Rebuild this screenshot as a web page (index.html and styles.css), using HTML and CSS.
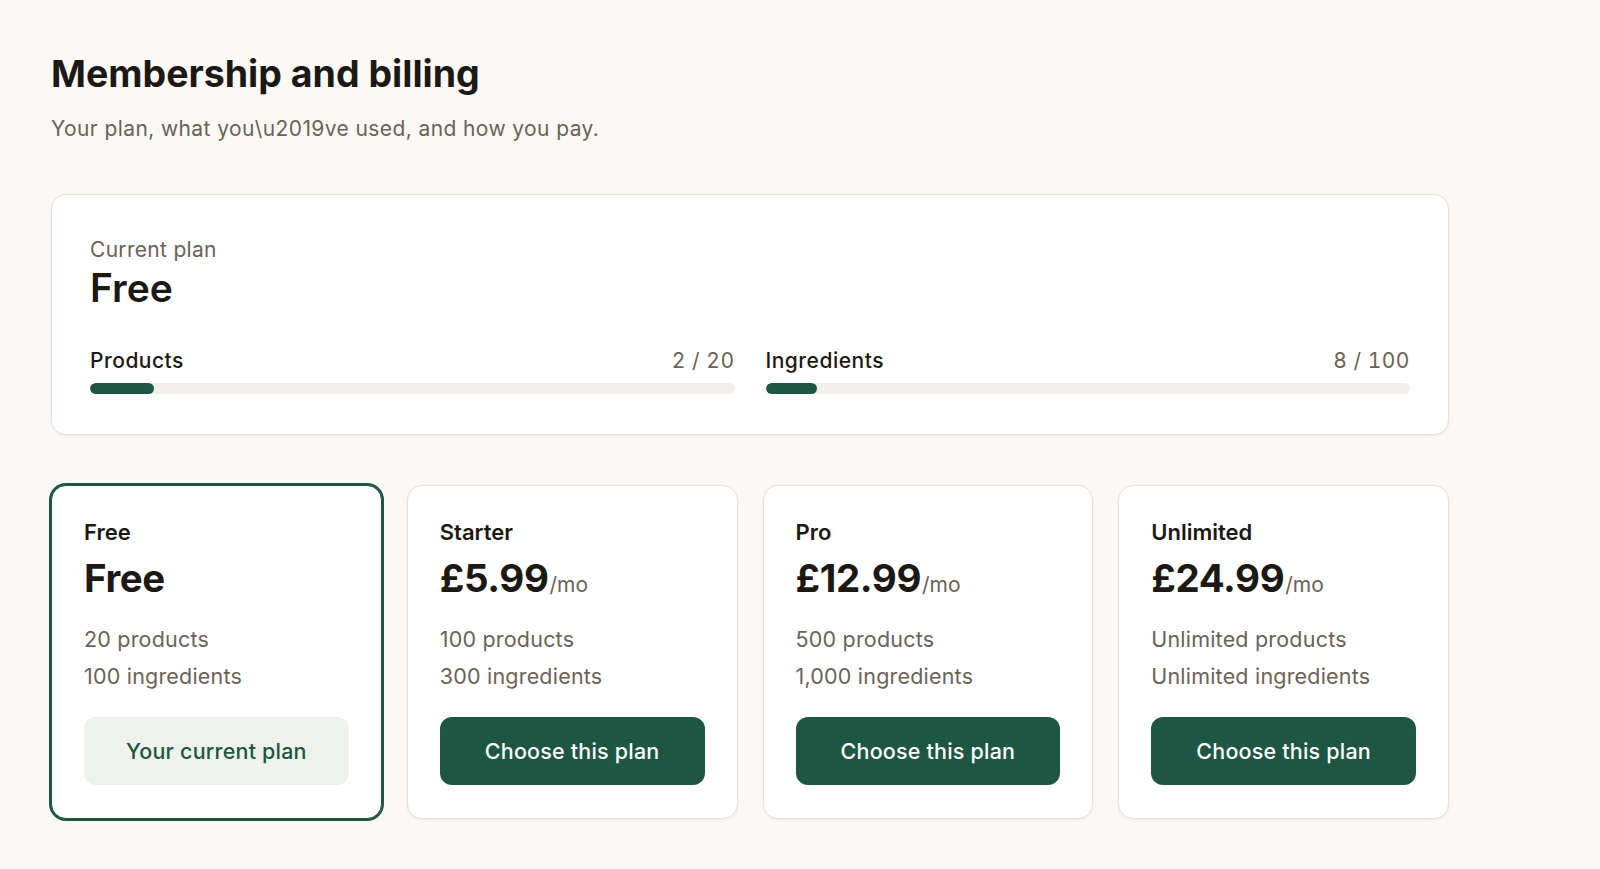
FILE: index.html
```html
<!DOCTYPE html>
<html lang="en">
<head>
<meta charset="utf-8">
<title>Membership and billing</title>
<link rel="stylesheet" href="styles.css">
</head>
<body>
<main class="page">
  <header class="page-head">
    <h1 class="page-title">Membership and billing</h1>
    <p class="page-sub">Your plan, what you\u2019ve used, and how you pay.</p>
  </header>

  <section class="current-card">
    <div class="current-label">Current plan</div>
    <div class="current-name">Free</div>
    <div class="usage">
      <div class="usage-item">
        <div class="usage-row">
          <span class="usage-name">Products</span>
          <span class="usage-count">2 / 20</span>
        </div>
        <div class="track"><div class="fill" style="width:10%"></div></div>
      </div>
      <div class="usage-item">
        <div class="usage-row">
          <span class="usage-name">Ingredients</span>
          <span class="usage-count">8 / 100</span>
        </div>
        <div class="track"><div class="fill" style="width:8%"></div></div>
      </div>
    </div>
  </section>

  <section class="plans">
    <div class="plan plan-selected">
      <div class="plan-name">Free</div>
      <div class="plan-price"><span class="amount">Free</span></div>
      <ul class="plan-features">
        <li>20 products</li>
        <li>100 ingredients</li>
      </ul>
      <button class="btn btn-current" type="button">Your current plan</button>
    </div>
    <div class="plan">
      <div class="plan-name">Starter</div>
      <div class="plan-price"><span class="amount">£5.99</span><span class="per">/mo</span></div>
      <ul class="plan-features">
        <li>100 products</li>
        <li>300 ingredients</li>
      </ul>
      <button class="btn btn-primary" type="button">Choose this plan</button>
    </div>
    <div class="plan">
      <div class="plan-name">Pro</div>
      <div class="plan-price"><span class="amount">£12.99</span><span class="per">/mo</span></div>
      <ul class="plan-features">
        <li>500 products</li>
        <li>1,000 ingredients</li>
      </ul>
      <button class="btn btn-primary" type="button">Choose this plan</button>
    </div>
    <div class="plan">
      <div class="plan-name">Unlimited</div>
      <div class="plan-price"><span class="amount">£24.99</span><span class="per">/mo</span></div>
      <ul class="plan-features">
        <li>Unlimited products</li>
        <li>Unlimited ingredients</li>
      </ul>
      <button class="btn btn-primary" type="button">Choose this plan</button>
    </div>
  </section>
</main>
</body>
</html>
```
FILE: styles.css
```css
* { box-sizing: border-box; }

html, body {
  margin: 0;
  padding: 0;
}

body {
  background: #faf9f5;
  color: #1f1b16;
  font-family: Inter, "Noto Sans", "Liberation Sans", sans-serif;
}

.page {
  width: 1500px;
  padding: 51px 51px 40px;
}

.page-head {
  width: 1398px;
}

.page-title {
  margin: 0;
  font-size: 37.5px;
  line-height: 45px;
  font-weight: 700;
  color: #1c1915;
}

.page-sub {
  margin: 18px 0 0;
  font-size: 21px;
  line-height: 30px;
  letter-spacing: 0.4px;
  color: #6b6257;
}

.current-card {
  width: 1398px;
  margin-top: 50px;
  background: #fff;
  border: 1px solid #e7e1d7;
  border-radius: 15px;
  box-shadow: 0 1px 3px rgba(60, 45, 20, 0.07);
  padding: 42px 38px 40px 38px;
}

.current-label {
  font-size: 21px;
  line-height: 25px;
  letter-spacing: 0.3px;
  color: #6b6257;
}

.current-name {
  margin-top: 2px;
  font-size: 39px;
  line-height: 47px;
  font-weight: 600;
  color: #1c1915;
}

.usage {
  margin-top: 38px;
  display: grid;
  grid-template-columns: 1fr 1fr;
  column-gap: 31px;
}

.usage-row {
  display: flex;
  justify-content: space-between;
  align-items: baseline;
  font-size: 21px;
  line-height: 24px;
  letter-spacing: 0.5px;
}

.usage-name {
  font-weight: 500;
  color: #1c1915;
}

.usage-count {
  color: #6b6257;
  font-variant-numeric: tabular-nums;
}

.track {
  margin-top: 10px;
  height: 11px;
  border-radius: 999px;
  background: #f2efe9;
  overflow: hidden;
}

.fill {
  height: 100%;
  border-radius: 999px;
  background: #1d5643;
}

.plans {
  width: 1398px;
  margin-top: 50px;
  display: grid;
  grid-template-columns: repeat(4, 1fr);
  column-gap: 25px;
}

.plan {
  background: #fff;
  border: 1px solid #e7e1d7;
  border-radius: 15px;
  box-shadow: 0 1px 3px rgba(60, 45, 20, 0.07);
  padding: 33px 32px 33px;
  display: flex;
  flex-direction: column;
}

.plan-selected {
  border-color: #1d5643;
  box-shadow: 0 0 0 2px #1d5643;
}

.plan-name {
  font-size: 22px;
  line-height: 27px;
  font-weight: 600;
  color: #1c1915;
}

.plan-price {
  margin-top: 9px;
  height: 46px;
  display: flex;
  align-items: baseline;
}

.amount {
  font-size: 38.5px;
  line-height: 46px;
  font-weight: 700;
  letter-spacing: -0.01em;
  color: #1c1915;
}

.per {
  font-size: 21px;
  line-height: 21px;
  color: #6b6257;
  margin-left: 1px;
}

.plan-features {
  list-style: none;
  margin: 20px 0 0;
  padding: 0;
  font-size: 21.5px;
  line-height: 37.3px;
  letter-spacing: 0.2px;
  color: #6b6257;
}

.btn {
  margin-top: 21px;
  height: 68.5px;
  width: 100%;
  border: 0;
  border-radius: 12px;
  font-family: inherit;
  font-size: 21.5px;
  font-weight: 500;
  letter-spacing: 0.2px;
  cursor: pointer;
}

.btn-primary {
  background: #1d5643;
  color: #ffffff;
}

.btn-current {
  background: #eff1ed;
  color: #1d5643;
}
```
